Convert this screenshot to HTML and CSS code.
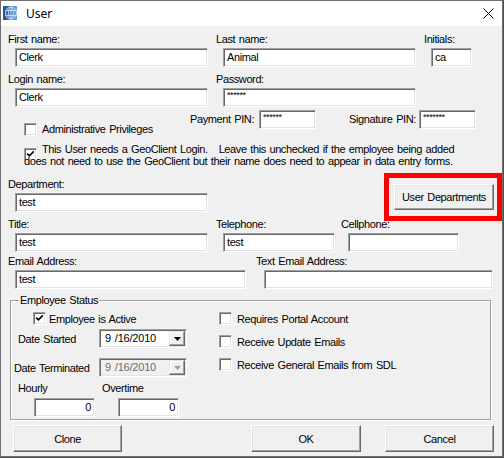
FILE: index.html
```html
<!DOCTYPE html>
<html>
<head>
<meta charset="utf-8">
<title>User</title>
<link rel="stylesheet" href="styles.css">
</head>
<body>
<div class="window">
  <div class="titlebar">
    <svg class="appicon" width="14" height="14" viewBox="0 0 14 14">
      <defs>
        <linearGradient id="g" x1="0" y1="0" x2="1" y2="0">
          <stop offset="0" stop-color="#1c4f96"/>
          <stop offset="1" stop-color="#6aa6dc"/>
        </linearGradient>
      </defs>
      <rect x="0" y="0" width="14" height="14" fill="url(#g)"/>
      <ellipse cx="8" cy="7" rx="5.5" ry="6" fill="none" stroke="#dbe9f7" stroke-width="0.8"/>
      <ellipse cx="8" cy="7" rx="2.5" ry="6" fill="none" stroke="#dbe9f7" stroke-width="0.8"/>
      <line x1="8" y1="1" x2="8" y2="13" stroke="#dbe9f7" stroke-width="0.8"/>
      <line x1="2.5" y1="4.5" x2="13.5" y2="4.5" stroke="#dbe9f7" stroke-width="0.8"/>
      <line x1="2.5" y1="9.5" x2="13.5" y2="9.5" stroke="#dbe9f7" stroke-width="0.8"/>
    </svg>
    <span class="title">User</span>
    <svg class="close" width="11" height="11" viewBox="0 0 11 11">
      <path d="M0.5 0.5 L10.5 10.5 M10.5 0.5 L0.5 10.5" stroke="#000" stroke-width="1"/>
    </svg>
  </div>

  <div class="client">
    <div class="row">
      <div class="field f208"><span class="lbl">First name:</span><div class="tb w193">Clerk</div></div>
      <div class="field f208"><span class="lbl">Last name:</span><div class="tb w193">Animal</div></div>
      <div class="field"><span class="lbl">Initials:</span><div class="tb w41">ca</div></div>
    </div>

    <div class="row mt6">
      <div class="field f208"><span class="lbl">Login name:</span><div class="tb w193">Clerk</div></div>
      <div class="field f208"><span class="lbl">Password:</span><div class="tb w193 pw">******</div></div>
    </div>

    <div class="row pinrow">
      <div class="admin"><span class="cb"></span><span>Administrative Privileges</span></div>
      <span class="pinlbl p1">Payment PIN:</span><div class="tb w57 pw">******</div>
      <span class="pinlbl p2">Signature PIN:</span><div class="tb w57 pw">*******</div>
    </div>

    <div class="geo">
      <span class="geo-cb"><span class="cb"><svg width="9" height="9" viewBox="0 0 9 9"><path d="M1.2 3.6 L3.4 5.8 L7.8 1.4" fill="none" stroke="#000" stroke-width="1.7"/></svg></span></span>This User needs a GeoClient Login.&nbsp;&nbsp; Leave this unchecked if the employee being added<br>does not need to use the GeoClient but their name does need to appear in data entry forms.
    </div>

    <div class="row deptrow">
      <div class="field f386"><span class="lbl">Department:</span><div class="tb w193">test</div></div>
      <div class="btnwrap">
        <div class="btn deptbtn">User Departments</div>
        <div class="redframe"></div>
      </div>
    </div>

    <div class="row mt6">
      <div class="field f208"><span class="lbl">Title:</span><div class="tb w193">test</div></div>
      <div class="field f125"><span class="lbl">Telephone:</span><div class="tb w112">test</div></div>
      <div class="field"><span class="lbl">Cellphone:</span><div class="tb w111"></div></div>
    </div>

    <div class="row mt3">
      <div class="field f248"><span class="lbl">Email Address:</span><div class="tb w231 gap1">test</div></div>
      <div class="field"><span class="lbl">Text Email Address:</span><div class="tb w229 gap1 ml8"></div></div>
    </div>

    <fieldset class="group">
      <legend>Employee Status</legend>
      <div class="gcols">
        <div class="gleft">
          <div class="active"><span class="cb"><svg width="9" height="9" viewBox="0 0 9 9"><path d="M1.2 3.6 L3.4 5.8 L7.8 1.4" fill="none" stroke="#000" stroke-width="1.7"/></svg></span><span>Employee is Active</span></div>
          <div class="daterow ds">
            <span class="dlbl w81">Date Started</span>
            <div class="combo"><span class="ctext">9 /16/2010</span><span class="drop"><svg width="7" height="4" viewBox="0 0 7 4"><path d="M0 0 H7 L3.5 4 Z" fill="#000"/></svg></span></div>
          </div>
          <div class="daterow dt">
            <span class="dlbl w85">Date Terminated</span>
            <div class="combo disabled"><span class="ctext">9 /16/2010</span><span class="drop"><svg width="7" height="4" viewBox="0 0 7 4"><path d="M0 0 H7 L3.5 4 Z" fill="#a0a0a0"/></svg></span></div>
          </div>
          <div class="paylbls"><span class="hl">Hourly</span><span>Overtime</span></div>
          <div class="payboxes"><div class="tb w61 num">0</div><div class="tb w61 num ot">0</div></div>
        </div>
        <div class="gright">
          <div class="rchk"><span class="cb"></span><span>Requires Portal Account</span></div>
          <div class="rchk"><span class="cb"></span><span>Receive Update Emails</span></div>
          <div class="rchk"><span class="cb"></span><span>Receive General Emails from SDL</span></div>
        </div>
      </div>
    </fieldset>

    <div class="btnrow">
      <div class="btn bclone">Clone</div>
      <div class="btn bok">OK</div>
      <div class="btn bcancel">Cancel</div>
    </div>
  </div>
</div>
</body>
</html>
```

FILE: styles.css
```css
html, body {
  margin: 0;
  padding: 0;
}
body {
  background: #4f4f4f;
  font-family: "Liberation Sans", Arial, sans-serif;
  font-size: 11px;
  letter-spacing: -0.4px;
  word-spacing: 1px;
  color: #000;
  width: 504px;
  height: 458px;
  overflow: hidden;
}
.window {
  width: 503px;
  height: 457px;
  box-sizing: border-box;
  border: 1px solid #6f6f6f;
  background: #f0f0f0;
}
.titlebar {
  height: 25px;
  background: #fff;
  display: flex;
  align-items: center;
  padding-left: 2px;
}
.appicon {
  display: block;
  margin-top: -2px;
}
.title {
  font-family: "Noto Sans", "Open Sans", sans-serif;
  font-size: 12px;
  letter-spacing: 0;
  word-spacing: 0;
  margin-left: 9px;
  color: #000;
}
.close {
  display: block;
  margin-left: auto;
  margin-right: 8px;
}
.client {
  padding: 7px 0 0 7px;
}
.row {
  display: flex;
  align-items: flex-start;
}
.mt6 { margin-top: 6px; }
.mt3 { margin-top: 3px; }
.field {
  display: flex;
  flex-direction: column;
}
.f208 { width: 208px; }
.f386 { width: 386px; }
.f125 { width: 125px; }
.f248 { width: 248px; }
.lbl {
  height: 13px;
  line-height: 13px;
  white-space: nowrap;
}
.tb {
  box-sizing: border-box;
  height: 19px;
  margin: 2px 0 0 7px;
  background: #fff;
  border-top: 1px solid #a0a0a0;
  border-left: 1px solid #a0a0a0;
  border-right: 1px solid #fff;
  border-bottom: 1px solid #fff;
  box-shadow: inset 1px 1px 0 #696969, inset -1px -1px 0 #e3e3e3;
  padding: 0 3px;
  line-height: 17px;
  white-space: nowrap;
  overflow: hidden;
}
.gap1 { margin-top: 2px; }
.ml8 { margin-left: 8px; }
.pw {
  font-size: 9px;
  line-height: 13px;
  letter-spacing: -0.4px;
}
.w193 { width: 193px; }
.w41 { width: 41px; }
.w57 { width: 57px; }
.w112 { width: 112px; }
.w111 { width: 111px; }
.w231 { width: 231px; }
.w229 { width: 229px; }
.w61 { width: 61px; }

.cb {
  box-sizing: border-box;
  width: 13px;
  height: 13px;
  flex: none;
  display: inline-flex;
  align-items: center;
  justify-content: center;
  background: #fff;
  border-top: 1px solid #a0a0a0;
  border-left: 1px solid #a0a0a0;
  border-right: 1px solid #fff;
  border-bottom: 1px solid #fff;
  box-shadow: inset 1px 1px 0 #696969, inset -1px -1px 0 #e3e3e3;
}
.cb svg { display: block; }

.pinrow {
  margin-top: 3px;
  padding-left: 16px;
}
.admin {
  width: 166px;
  margin-top: 13px;
  display: flex;
  align-items: center;
  gap: 5px;
  height: 13px;
  line-height: 13px;
  white-space: nowrap;
}
.pinlbl {
  line-height: 19px;
  white-space: nowrap;
}
.p1 { width: 69px; }
.p2 { width: 70px; margin-left: 33px; }
.pinrow .tb { margin: 0; }

.geo {
  margin-top: 7px;
  padding-left: 16px;
  line-height: 12px;
  white-space: nowrap;
}
.geo-cb {
  float: left;
  width: 18px;
  height: 12px;
}
.geo-cb .cb {
  margin-top: 5px;
  display: flex;
}

.deptrow { margin-top: 11px; }
.btnwrap {
  position: relative;
  margin-top: 6px;
}
.btn {
  box-sizing: border-box;
  background: #f0f0f0;
  border-top: 1px solid #fff;
  border-left: 1px solid #fff;
  border-right: 1px solid #696969;
  border-bottom: 1px solid #696969;
  box-shadow: inset -1px -1px 0 #a0a0a0, inset 1px 1px 0 #e3e3e3;
  display: flex;
  align-items: center;
  justify-content: center;
  white-space: nowrap;
}
.deptbtn {
  width: 100px;
  height: 26px;
}
.redframe {
  position: absolute;
  left: -10px;
  right: -8px;
  top: -11px;
  bottom: -11px;
  border: 5px solid #ff0000;
}

.group {
  box-sizing: border-box;
  margin: 5px 0 0 2px;
  padding: 0;
  width: 481px;
  height: 126px;
  border: 1px solid #a0a0a0;
  box-shadow: 1px 1px 0 #fff, inset 1px 1px 0 #fff;
  min-width: 0;
}
.group legend {
  margin-left: 8px;
  padding: 0 1px;
  line-height: 13px;
  background: #f0f0f0;
}
.gcols {
  display: flex;
}
.gleft {
  width: 208px;
}
.active {
  margin-top: 5px;
  padding-left: 22px;
  display: flex;
  align-items: center;
  gap: 3px;
  height: 13px;
  white-space: nowrap;
}
.daterow {
  display: flex;
  align-items: center;
  height: 19px;
}
.ds { margin-top: 4px; padding-left: 7px; }
.dt { margin-top: 10px; padding-left: 3px; }
.dlbl { white-space: nowrap; }
.w81 { width: 81px; }
.w85 { width: 85px; }
.combo {
  box-sizing: border-box;
  width: 88px;
  height: 19px;
  background: #fff;
  border-top: 1px solid #a0a0a0;
  border-left: 1px solid #a0a0a0;
  border-right: 1px solid #fff;
  border-bottom: 1px solid #fff;
  box-shadow: inset 1px 1px 0 #696969, inset -1px -1px 0 #e3e3e3;
  display: flex;
  align-items: stretch;
  padding: 1px 1px 1px 1px;
}
.combo.disabled {
  background: #f0f0f0;
  color: #6d6d6d;
}
.ctext {
  flex: 1;
  padding-left: 4px;
  line-height: 15px;
  letter-spacing: -0.2px;
}
.drop {
  box-sizing: border-box;
  width: 16px;
  background: #f0f0f0;
  border-top: 1px solid #e3e3e3;
  border-left: 1px solid #e3e3e3;
  border-right: 1px solid #696969;
  border-bottom: 1px solid #696969;
  box-shadow: inset -1px -1px 0 #a0a0a0, inset 1px 1px 0 #fff;
  display: flex;
  align-items: center;
  justify-content: center;
}
.drop svg { display: block; }
.paylbls {
  margin-top: 5px;
  padding-left: 7px;
  display: flex;
  line-height: 13px;
}
.hl { width: 84px; }
.payboxes {
  margin-top: 3px;
  padding-left: 23px;
  display: flex;
}
.payboxes .tb { margin: 0; }
.payboxes .ot { margin-left: 23px; }
.num { text-align: right; }

.gright {
  padding-top: 5px;
}
.rchk {
  display: flex;
  align-items: center;
  gap: 5px;
  height: 13px;
  margin-bottom: 10px;
  white-space: nowrap;
}

.btnrow {
  margin-top: 5px;
  padding-left: 5px;
  display: flex;
}
.btnrow .btn { height: 27px; }
.bclone { width: 109px; }
.bok { width: 110px; margin-left: 129px; }
.bcancel { width: 109px; margin-left: 24px; }
```
